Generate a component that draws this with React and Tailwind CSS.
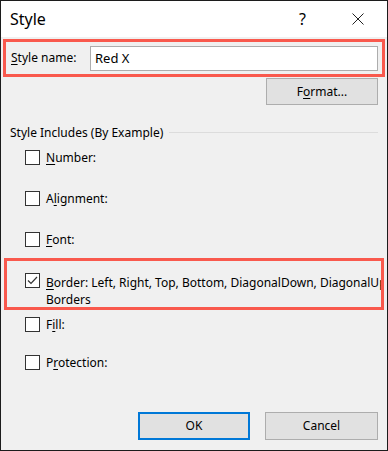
import React from "react";

function Check({ checked }) {
  return (
    <div className="w-[15px] h-[15px] shrink-0 border border-[#333333] bg-white flex items-center justify-center">
      {checked && (
        <svg width="11" height="9" viewBox="0 0 11 9">
          <path d="M1 4.5 L4 7.5 L10 1" fill="none" stroke="#333333" strokeWidth="1.2" />
        </svg>
      )}
    </div>
  );
}

function Option({ children, className = "" }) {
  return (
    <div className={"flex items-center gap-[6px] pl-[24px] h-[15px] " + className}>
      <Check />
      <span>{children}</span>
    </div>
  );
}

const U = ({ children }) => <span className="underline underline-offset-2">{children}</span>;

export default function App() {
  return (
    <div
      className="w-[388px] h-[451px] border border-[#1c1c1c] bg-[#f0f0f0] text-[12px] leading-[16px] text-black flex flex-col overflow-hidden"
      style={{ fontFamily: '"Noto Sans", "Open Sans", sans-serif' }}
    >
      {/* Title bar */}
      <div className="h-[36px] bg-white flex items-center shrink-0">
        <span className="ml-[9px] text-[16px]">Style</span>
        <span className="ml-auto text-[16px] mr-[46px]">?</span>
        <svg width="12" height="12" viewBox="0 0 12 12" className="mr-[23px]">
          <path d="M0.5 0.5 L11.5 11.5 M11.5 0.5 L0.5 11.5" stroke="#222" strokeWidth="1" />
        </svg>
      </div>

      {/* Style name row */}
      <div className="mt-[2px] mx-[2px] h-[38px] border-[3px] border-[#f9594d] flex items-center pl-[5px] pr-[4px]">
        <span className="w-[79px]">
          <U>S</U>tyle name:
        </span>
        <div className="flex-1 h-[25px] bg-white border border-[#adadad] flex items-center pl-[4px] text-[13px]">
          Red X
        </div>
      </div>

      <div className="flex justify-end pr-[9px] mt-[1px]">
        <button className="w-[112px] h-[27px] bg-[#e1e1e1] border border-[#adadad]">
          F<U>o</U>rmat...
        </button>
      </div>

      {/* Group */}
      <div className="mt-[20px] flex items-center pl-[9px] pr-[9px]">
        <span>Style Includes (By Example)</span>
        <div className="flex-1 h-px bg-[#dcdcdc] ml-[6px] mt-[-2px]" />
      </div>

      <Option className="mt-[9px]">
        <U>N</U>umber:
      </Option>
      <Option className="mt-[26px]">
        A<U>l</U>ignment:
      </Option>
      <Option className="mt-[26px]">
        <U>F</U>ont:
      </Option>

      <div className="mt-[11px] mx-[3px] h-[52px] border-[3px] border-[#f9594d] pl-[18px] pt-[12px] overflow-hidden">
        <div className="flex items-start gap-[6px]">
          <Check checked />
          <div className="leading-[17px] whitespace-nowrap mt-[1px]">
            <div>
              <U>B</U>order: Left, Right, Top, Bottom, DiagonalDown, DiagonalUp
            </div>
            <div>Borders</div>
          </div>
        </div>
      </div>

      <Option className="mt-[7px]">
        F<U>i</U>ll:
      </Option>
      <Option className="mt-[23px]">
        P<U>r</U>otection:
      </Option>

      {/* Buttons */}
      <div className="mt-auto mb-[10px] flex justify-end gap-[15px] pr-[9px]">
        <button className="w-[112px] h-[28px] bg-[#e1e1e1] border-2 border-[#0078d7]">OK</button>
        <button className="w-[113px] h-[28px] bg-[#e1e1e1] border border-[#adadad]">Cancel</button>
      </div>
    </div>
  );
}
